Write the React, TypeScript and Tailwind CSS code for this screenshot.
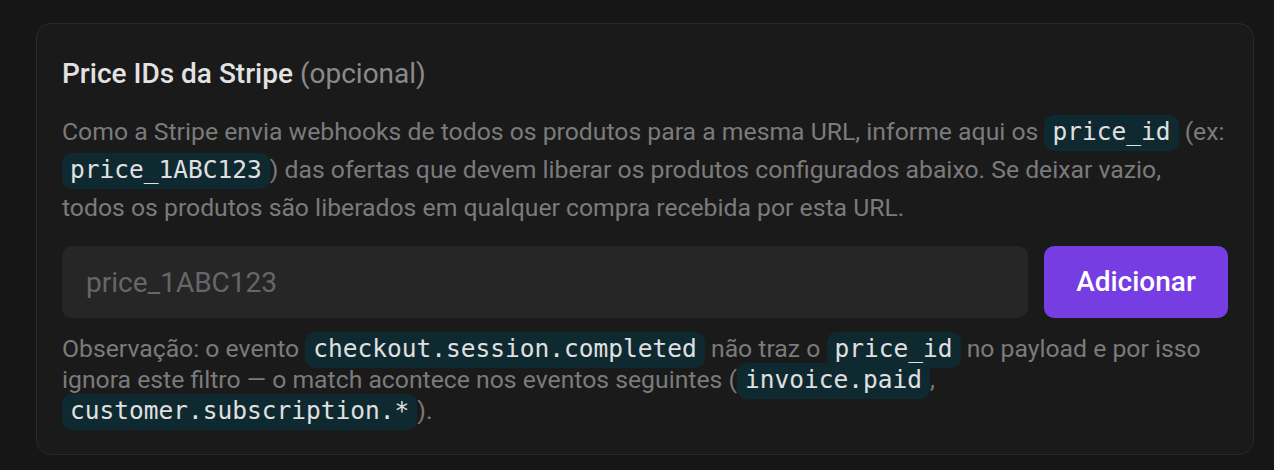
import React from "react";

function Code({ children }: { children: React.ReactNode }) {
  return (
    <span className="rounded-[10px] bg-[#0f2930] px-[8px] pb-[5px] pt-[2px] font-['DejaVu_Sans_Mono',monospace] text-[24.5px] leading-none text-[#e0e0e0] [box-decoration-break:clone]">
      {children}
    </span>
  );
}

export default function App() {
  return (
    <div className="min-h-[470px] w-full bg-[#161616] pl-[36px] pt-[23px] font-['Roboto',sans-serif]">
      <div className="w-[1218px] rounded-[15px] border border-[#2a2a2a] bg-[#1a1a1a] px-[25px] pb-[28px] pt-[29px]">
        <h2 className="text-[28px] font-medium leading-[42px] text-[#e2e2e2]">
          Price IDs da Stripe <span className="font-normal text-[#8a8a8a]">(opcional)</span>
        </h2>
        <p className="mt-[18px] text-[24.75px] leading-[38px] text-[#7b7b7b]">
          Como a Stripe envia webhooks de todos os produtos para a mesma URL, informe aqui os{" "}
          <Code>price_id</Code> (ex: <Code>price_1ABC123</Code>) das ofertas que devem liberar os produtos
          configurados abaixo. Se deixar vazio, todos os produtos são liberados em qualquer compra recebida por
          esta URL.
        </p>
        <div className="mt-[19px] flex h-[72px] gap-[16px]">
          <input
            className="h-full flex-1 rounded-[10px] bg-[#262626] pl-[24px] text-[28px] text-[#e0e0e0] outline-none placeholder:text-[#666666]"
            placeholder="price_1ABC123"
          />
          <button className="h-full w-[184px] rounded-[10px] bg-[#753de2] text-[28px] font-medium text-white">
            Adicionar
          </button>
        </div>
        <p className="mt-[15px] text-[24.75px] leading-[31px] text-[#7b7b7b]">
          Observação: o evento <Code>checkout.session.completed</Code> não traz o <Code>price_id</Code> no
          payload e por isso ignora este filtro — o match acontece nos eventos seguintes (<Code>invoice.paid</Code>
          , <Code>customer.subscription.*</Code>).
        </p>
      </div>
    </div>
  );
}
